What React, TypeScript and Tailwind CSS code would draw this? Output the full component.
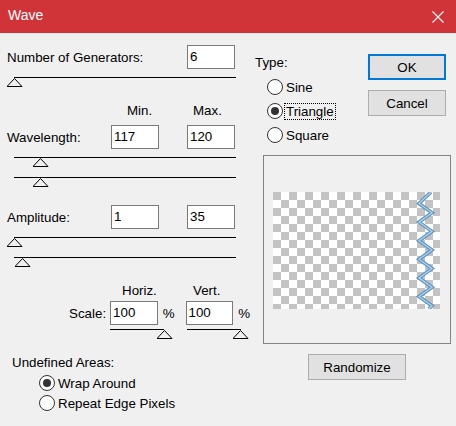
import React from "react";

const Input = ({ v }: { v: string }) => (
  <div className="w-[48px] h-[24px] border border-[#7a7a7a] bg-white flex items-center pl-[2px] pb-[2px] leading-[15px]">
    {v}
  </div>
);

const Thumb = ({ className }: { className: string }) => (
  <svg className={`absolute top-0 ${className}`} width="16" height="9" viewBox="0 0 16 9">
    <polygon points="7.5,0.5 15,8.5 0,8.5" fill="#f0f0f0" stroke="#000" strokeWidth="1" />
  </svg>
);

const Slider = ({ className, thumb }: { className: string; thumb: string }) => (
  <div className={`relative h-[9px] border-t border-black ${className}`}>
    <Thumb className={thumb} />
  </div>
);

const Radio = ({
  checked,
  label,
  focus,
  h,
}: {
  checked?: boolean;
  label: string;
  focus?: boolean;
  h: string;
}) => (
  <div className={`flex items-center ${h}`}>
    <span className="w-[16px] h-[16px] rounded-full border border-[#333333] bg-white flex items-center justify-center shrink-0">
      {checked && <span className="w-[8px] h-[8px] rounded-full bg-[#333333]" />}
    </span>
    <span
      className={`ml-[2px] px-[1px] leading-[15px] ${
        focus ? "outline outline-1 outline-dotted outline-black" : ""
      }`}
    >
      {label}
    </span>
  </div>
);

const Preview = () => {
  const pts: string[] = ["158,0"];
  const period = 18.6;
  for (let k = 0; k < 7; k++) {
    const left = 11.5 + period * k;
    const right = 11.5 + period * k + period / 2;
    if (left < 117) pts.push(`146,${left.toFixed(1)}`);
    if (right < 117) pts.push(`159,${right.toFixed(1)}`);
  }
  pts.push("156,117");
  const p = pts.join(" ");
  return (
    <svg width="167" height="117" viewBox="0 0 167 117">
      <defs>
        <pattern id="chk" width="16" height="16" patternUnits="userSpaceOnUse">
          <rect width="16" height="16" fill="#ffffff" />
          <rect width="8" height="8" fill="#c3c3c3" />
          <rect x="8" y="8" width="8" height="8" fill="#c3c3c3" />
        </pattern>
      </defs>
      <rect width="167" height="117" fill="url(#chk)" />
      <polyline points={p} fill="none" stroke="#5e93c0" strokeWidth="3.6" strokeLinejoin="miter" />
      <polyline points={p} fill="none" stroke="#a6d1ef" strokeWidth="1.4" strokeLinejoin="miter" />
    </svg>
  );
};

export default function App() {
  return (
    <div className="w-[456px] h-[426px] bg-[#f0f0f0] text-black text-[13.33px] leading-[15px] font-['Liberation_Sans',Arial,sans-serif] overflow-hidden">
      {/* Title bar */}
      <div className="h-[33px] bg-[#d13438] flex items-center justify-between pl-[8px] pr-[12px]">
        <span className="text-white text-[14px] pb-[2px]">Wave</span>
        <svg width="12" height="12" viewBox="0 0 12 12">
          <path d="M0.5 0.5 L11.5 11.5 M11.5 0.5 L0.5 11.5" stroke="#ffffff" strokeWidth="1.1" />
        </svg>
      </div>

      <div className="flex">
        {/* Left column */}
        <div className="w-[250px] flex flex-col">
          <div className="mt-[12px] h-[24px] flex items-center">
            <span className="w-[187px] pl-[7px]">Number of Generators:</span>
            <Input v="6" />
          </div>
          <Slider className="mt-[8px] ml-[14px] w-[222px]" thumb="left-[-7px]" />

          <div className="mt-[17px] h-[15px] flex">
            <span className="w-[187px] pl-[127px]">Min.</span>
            <span className="pl-[6px]">Max.</span>
          </div>
          <div className="mt-[7px] h-[24px] flex items-center">
            <span className="w-[111px] pl-[7px]">Wavelength:</span>
            <Input v="117" />
            <div className="w-[28px]" />
            <Input v="120" />
          </div>
          <Slider className="mt-[8px] ml-[14px] w-[222px]" thumb="left-[19px]" />
          <Slider className="mt-[11px] ml-[14px] w-[222px]" thumb="left-[19px]" />

          <div className="mt-[19px] h-[24px] flex items-center">
            <span className="w-[111px] pl-[7px]">Amplitude:</span>
            <Input v="1" />
            <div className="w-[28px]" />
            <Input v="35" />
          </div>
          <Slider className="mt-[8px] ml-[14px] w-[222px]" thumb="left-[-7px]" />
          <Slider className="mt-[11px] ml-[14px] w-[222px]" thumb="left-[1px]" />

          <div className="mt-[17px] h-[15px] flex">
            <span className="w-[187px] pl-[122px]">Horiz.</span>
            <span className="pl-[6px]">Vert.</span>
          </div>
          <div className="mt-[3px] h-[24px] flex items-center">
            <span className="w-[111px] pr-[4px] text-right">Scale:</span>
            <Input v="100" />
            <span className="w-[28px] pl-[5px]">%</span>
            <Input v="100" />
            <span className="pl-[5px]">%</span>
          </div>
          <div className="mt-[4px] flex">
            <Slider className="ml-[110px] w-[54px]" thumb="left-[47px]" />
            <Slider className="ml-[23px] w-[54px]" thumb="left-[46px]" />
          </div>

          <div className="mt-[17px] h-[15px] pl-[12px]">Undefined Areas:</div>
          <div className="mt-[3px] pl-[39px] flex flex-col">
            <Radio checked label="Wrap Around" h="h-[20px]" />
            <Radio label="Repeat Edge Pixels" h="h-[20px]" />
          </div>
        </div>

        {/* Right column */}
        <div className="flex-1 flex flex-col">
          <div className="mt-[21px] flex">
            <div className="w-[118px] pl-[5px]">
              <div className="mt-[1px] h-[15px]">Type:</div>
              <div className="mt-[5px] pl-[12px] flex flex-col">
                <Radio label="Sine" h="h-[24px]" />
                <Radio checked focus label="Triangle" h="h-[24px]" />
                <Radio label="Square" h="h-[24px]" />
              </div>
            </div>
            <div className="flex flex-col gap-[10px]">
              <div className="w-[78px] h-[26px] border-2 border-[#0078d7] bg-[#e1e1e1] flex items-center justify-center">
                OK
              </div>
              <div className="w-[78px] h-[26px] border border-[#adadad] bg-[#e1e1e1] flex items-center justify-center">
                Cancel
              </div>
            </div>
          </div>

          <div className="mt-[8px] ml-[13px] w-[188px] h-[189px] border border-[#838383] pl-[9px] pt-[36px]">
            <Preview />
          </div>

          <div className="mt-[10px] ml-[58px] w-[98px] h-[26px] border border-[#adadad] bg-[#e1e1e1] flex items-center justify-center">
            Randomize
          </div>
        </div>
      </div>
    </div>
  );
}
